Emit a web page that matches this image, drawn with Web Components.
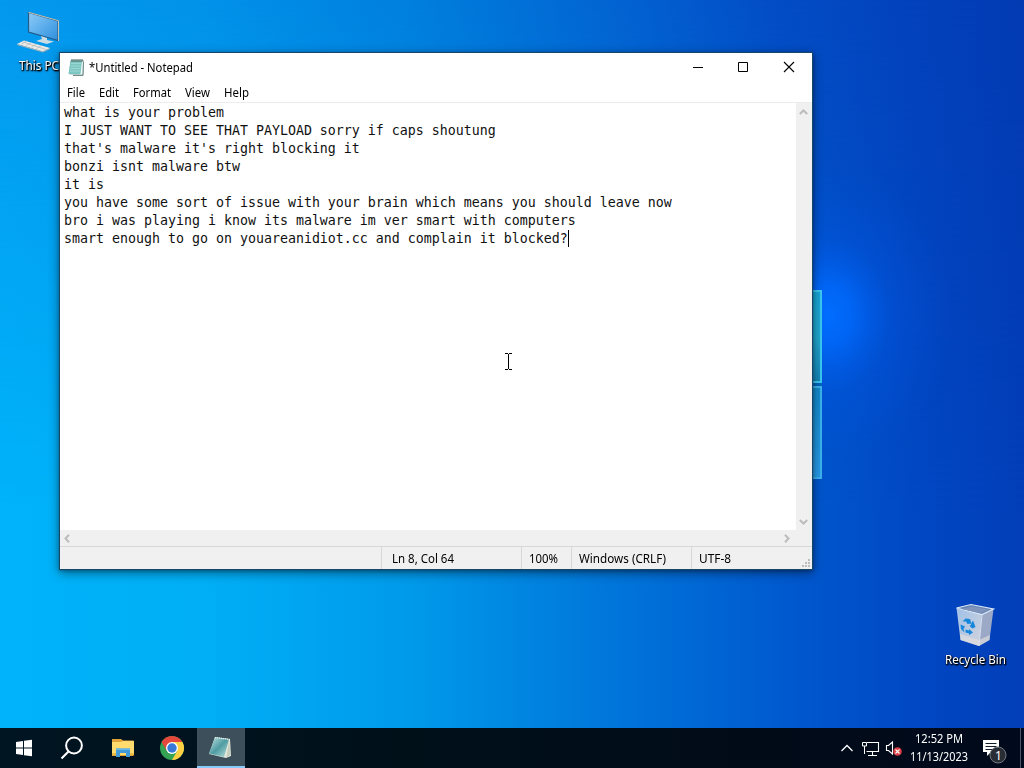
<!DOCTYPE html>
<html lang="en">
<head>
<meta charset="utf-8">
<title>Desktop</title>
<style>
html,body{margin:0;width:1024px;height:768px;overflow:hidden;font:12px/16px "Noto Sans","Open Sans",sans-serif;color:#000}
</style>
</head>
<body>
<win-desktop>
  <wall-paper slot="wall"></wall-paper>
  <desktop-icon slot="item" style="left:2px;top:8px" label="This PC" w="40">
    <svg width="48" height="48" viewBox="2 0 48 48">
      <defs><linearGradient id="scr" x1="0" y1="0" x2="1" y2="1"><stop offset="0" stop-color="#8fcaf5"/><stop offset=".5" stop-color="#5caeec"/><stop offset="1" stop-color="#308edb"/></linearGradient></defs>
      <path d="M15.500 4.500 45 13V32.500L15.500 24z" fill="url(#scr)" stroke="#235b89" stroke-width="1.200"/>
      <path d="M15.500 4.300 45.500 12.700V33" fill="none" stroke="#c9c3b0" stroke-width="1"/>
      <path d="M28 28 34 30v2l7 1.500-7 2.500-11-3 6-2z" fill="#cddbe2"/>
      <path d="M4 36 11 32.500 37 40 30 43.500z" fill="#ece8e2"/>
      <path d="M4 36 30 43.500 37 40v1l-7 3.500L4 37z" fill="#a7b2b8"/>
      <path d="M10 34 33 41.500M8.500 36l5-3m0 4.500 5-3m0 4.500 5-3m0 4.500 5-3" stroke="#a7b7c0" stroke-width=".7" fill="none"/>
    </svg>
  </desktop-icon>
  <desktop-icon slot="item" style="left:938px;top:602px" label="Recycle Bin" w="61">
    <svg width="48" height="48" viewBox="0 0 48 48">
      <defs><linearGradient id="bin" x1="0" y1="0" x2="1" y2="1"><stop offset="0" stop-color="#9fc1e8"/><stop offset="1" stop-color="#d2d3dc"/></linearGradient></defs>
      <path d="M5.500 6 31 12.500 28 44 9.500 38z" fill="url(#bin)"/>
      <path d="M31 12.500 42.500 7 38.500 38 28 44z" fill="#9ba9c7"/>
      <path d="M5.500 6 20 2.500 42.500 7 31 12.500z" fill="#6384b5" stroke="#dbe7f5" stroke-width="1.200"/>
      <path d="M10 7 21 4.500 38 7.500 30 11z" fill="#8094b9"/>
      <path d="M9 32 28 38v6L9.500 38zM28 38l11-5-.5 5L28 44z" fill="#e2dfdd" opacity=".65"/>
      <path d="M31 13 28 44" stroke="#d9e2ee" stroke-width="1"/>
      <path d="m11.500 19.500 3-3 4.500.5 1.500 4.500-4 .5-1.500-2.500zM22 18.500l2.500 6.500-3 1.500-3-2.500 1.200-1zM9.500 22.500l4.500 2-1.500 2.500 1 3.500-3.500-3.500zM14.500 27.500l3.500 1V27l4 3.500-4 2.500v-1.500l-3.500-1z" fill="#1787dc"/>
    </svg>
  </desktop-icon>
  <notepad-window slot="item">
    <menu-item slot="menu" label="File" w="18"></menu-item>
    <menu-item slot="menu" label="Edit" w="20"></menu-item>
    <menu-item slot="menu" label="Format" w="38"></menu-item>
    <menu-item slot="menu" label="View" w="25"></menu-item>
    <menu-item slot="menu" label="Help" w="25"></menu-item>
    <div>what is your problem</div>
    <div>I JUST WANT TO SEE THAT PAYLOAD sorry if caps shoutung</div>
    <div>that's malware it's right blocking it</div>
    <div>bonzi isnt malware btw</div>
    <div>it is</div>
    <div>you have some sort of issue with your brain which means you should leave now</div>
    <div>bro i was playing i know its malware im ver smart with computers</div>
    <div>smart enough to go on youareanidiot.cc and complain it blocked?<text-caret></text-caret></div>
  </notepad-window>
  <task-bar slot="bar"></task-bar>
</win-desktop>

<script>
const define = (name, html, init) => {
  const tpl = document.createElement('template');
  tpl.innerHTML = html;
  customElements.define(name, class extends HTMLElement {
    connectedCallback() {
      if (this.shadowRoot) return;
      this.attachShadow({mode: 'open'}).append(tpl.content.cloneNode(true));
      if (init) init(this, this.shadowRoot);
    }
  });
};

// A single line of interface text condensed to the width of its label box.
define('fit-text', `<style>
  :host{display:block;height:16px;flex:none;white-space:nowrap}
  span{display:inline-block;transform-origin:0 50%}
</style><span><slot></slot></span>`, (host, root) => {
  const w = +host.getAttribute('w'), span = root.querySelector('span');
  host.style.width = w + 'px';
  span.style.transform = 'scaleX(' + w / span.getBoundingClientRect().width + ')';
});

define('win-desktop', `<style>
  :host{display:grid;grid-template-rows:728px 40px;width:1024px;height:768px;position:relative;overflow:hidden}
  .area{position:relative;overflow:hidden}
</style><div class="area"><slot name="wall"></slot><slot name="item"></slot></div><slot name="bar"></slot>`);

define('wall-paper', `<style>
  :host{display:block;height:100%}
  svg{display:block}
</style>
<svg width="1024" height="728">
  <defs>
    <linearGradient id="top" x1="0" x2="1"><stop offset="0" stop-color="#0499ee"/><stop offset=".2" stop-color="#0292ea"/><stop offset=".4" stop-color="#007fde"/><stop offset=".6" stop-color="#0364d2"/><stop offset=".75" stop-color="#034ec6"/><stop offset=".9" stop-color="#0341bb"/><stop offset="1" stop-color="#033bb3"/></linearGradient>
    <linearGradient id="low" x1="0" x2="1"><stop offset="0" stop-color="#00b3fa"/><stop offset=".2" stop-color="#00aff6"/><stop offset=".4" stop-color="#009aea"/><stop offset=".6" stop-color="#0075da"/><stop offset=".75" stop-color="#005cd0"/><stop offset=".9" stop-color="#0147c3"/><stop offset="1" stop-color="#023eb8"/></linearGradient>
    <linearGradient id="fade" x2="0" y2="1"><stop offset="0" stop-color="#000"/><stop offset=".7" stop-color="#fff"/></linearGradient>
    <mask id="m"><rect width="1024" height="728" fill="url(#fade)"/></mask>
    <radialGradient id="glow"><stop offset="0" stop-color="#006dff"/><stop offset=".2" stop-color="#0068fb" stop-opacity=".85"/><stop offset=".5" stop-color="#0058e4" stop-opacity=".4"/><stop offset="1" stop-color="#0050d8" stop-opacity="0"/></radialGradient>
    <linearGradient id="p1" x2="0" y2="1"><stop offset="0" stop-color="#16a6d8"/><stop offset=".5" stop-color="#21a7cf"/><stop offset="1" stop-color="#1584b7"/></linearGradient>
    <linearGradient id="p2" x2="0" y2="1"><stop offset="0" stop-color="#1489ca"/><stop offset="1" stop-color="#299be8"/></linearGradient>
  </defs>
  <rect width="1024" height="728" fill="url(#top)"/>
  <rect width="1024" height="728" fill="url(#low)" mask="url(#m)"/>
  <ellipse cx="828" cy="315" rx="125" ry="155" fill="url(#glow)"/>
  <rect x="800" y="291" width="21" height="91" fill="url(#p1)" stroke="#38c9f3" stroke-width="2"/>
  <rect x="800" y="387" width="21" height="91" fill="url(#p2)" stroke="#39b4ef" stroke-width="2"/>
  <rect x="800" y="383" width="22" height="3" fill="#0065bc"/>
</svg>`);

define('desktop-icon', `<style>
  :host{position:absolute;display:flex;flex-direction:column;align-items:center;gap:2px;width:74px;color:#fff;text-shadow:1px 1px 1px #000,0 1px 2px #000,1px 1px 2px #000}
</style><slot></slot><fit-text></fit-text>`, (host, root) => {
  const t = root.querySelector('fit-text'), n = document.createElement('fit-text');
  n.setAttribute('w', host.getAttribute('w'));
  n.textContent = host.getAttribute('label');
  t.replaceWith(n);
});

define('menu-item', `<style>:host{display:block}</style>`, (host, root) => {
  const n = document.createElement('fit-text');
  n.setAttribute('w', host.getAttribute('w'));
  n.textContent = host.getAttribute('label');
  root.append(n);
});

define('text-caret', `<style>:host{display:inline-block;width:1px;height:17px;background:#000;vertical-align:top}</style>`);

define('text-cursor', `<style>:host{position:absolute;left:444px;top:300px;width:9px;height:17px}svg{display:block}</style>
<svg width="9" height="17"><path d="M1 .5h3m1 0h3M4.500 1v15M1 16.500h3m1 0h3" stroke="#000" fill="none"/></svg>`);

define('scroll-arrow', `<style>:host{display:grid;place-items:center;width:15px;height:16px}svg{display:block}</style>
<svg width="9" height="9" viewBox="0 0 9 9"><path d="M.8 6 4.500 2.500 8.200 6" fill="none" stroke="#bcbcbc" stroke-width="2"/></svg>`, (host, root) => {
  root.querySelector('svg').style.transform = 'rotate(' + (host.getAttribute('turn') || 0) + 'deg)';
});

define('notepad-window', `<style>
  :host{position:absolute;left:59px;top:52px;width:752px;height:516px;border:1px solid #164669;background:#fff;display:flex;flex-direction:column;box-shadow:0 3px 10px rgba(0,0,0,.45),0 1px 3px rgba(0,0,0,.25)}
  header{height:29px;display:flex;align-items:center;flex:none}
  header>svg{flex:none}
  .ico{margin:0 5px 0 8px}
  .btns{margin-left:auto;display:flex}
  .btns svg{display:block}
  nav{height:20px;display:flex;gap:14px;padding:1px 0 0 7px;box-sizing:border-box;flex:none;align-items:center}
  .body{display:grid;grid-template-columns:736px 16px;grid-template-rows:427px;height:428px;box-sizing:border-box;border-top:1px solid #ececec;flex:none}
  .text{font:13.290px/18px "DejaVu Sans Mono","Liberation Mono",monospace;padding:1px 0 0 4px;color:#111;white-space:nowrap}
  .vs{background:#f0f0f0;display:flex;flex-direction:column;justify-content:space-between;padding:1px 0}
  .hs{background:#f0f0f0;height:17px;display:flex;justify-content:space-between;align-items:flex-start;padding-right:18px;border-bottom:1px solid #d7d7d7;box-sizing:border-box;flex:none}
  footer{flex:1;background:#f0f0f0;display:grid;grid-template-columns:321px 140px 50px 120px 1fr;position:relative}
  footer>div{border-left:1px solid #d7d7d7;display:flex;align-items:center;padding:2px 0 0 7px}
  footer>div:first-child{border:0}
  .grip{position:absolute;right:1px;bottom:1px}
  text-cursor{z-index:1}
</style>
<header>
  <svg class="ico" width="16" height="18" viewBox="0 1 16 18"><path d="M3 2.500h12.500L15 17 1.500 16z" fill="#eefafa" stroke="#8da7a4" stroke-width=".7"/><path d="M2.500 2.500H14L12.500 16H.5z" fill="#7cc6c2"/><path d="M3 5.500h10M2.700 8h10M2.300 10.500h10M2 13h10" stroke="#a6dcd9" stroke-width=".8"/><path d="M15.500 4 15 17.500H5" fill="none" stroke="#6f8b87"/><path d="M4 1v3m2-3v3m2-3v3m2-3v3m2-3v3m2-3v3" stroke="#49625f"/></svg>
  <fit-text w="104">*Untitled - Notepad</fit-text>
  <div class="btns">
    <svg width="46" height="29"><path d="M19 14.500h10" stroke="#000"/></svg>
    <svg width="46" height="29"><path d="M18.500 9.500h9v9h-9z" fill="none" stroke="#000"/></svg>
    <svg width="46" height="29"><path d="m18 9 10 10M28 9 18 19" stroke="#000" stroke-width="1.100"/></svg>
  </div>
</header>
<nav><slot name="menu"></slot></nav>
<div class="body">
  <div class="text"><slot></slot></div>
  <div class="vs"><scroll-arrow></scroll-arrow><scroll-arrow turn="180"></scroll-arrow></div>
</div>
<div class="hs"><scroll-arrow turn="-90"></scroll-arrow><scroll-arrow turn="90"></scroll-arrow></div>
<footer>
  <div></div><div style="padding-left:10px"><fit-text w="62">Ln 8, Col 64</fit-text></div><div><fit-text w="29">100%</fit-text></div><div><fit-text w="87">Windows (CRLF)</fit-text></div><div><fit-text w="32">UTF-8</fit-text></div>
  <svg class="grip" width="9" height="9"><path d="M6 0h2v2H6zM3 3h2v2H3zM6 3h2v2H6zM0 6h2v2H0zM3 6h2v2H3zM6 6h2v2H6z" fill="#bdbdbd"/></svg>
</footer>
<text-cursor></text-cursor>`);

define('task-bar', `<style>
  :host{display:flex;justify-content:space-between;height:40px;background:linear-gradient(90deg,#001522,#001019 40%,#010b18 75%,#010a1c);color:#fff}
  .left,.tray{display:flex;align-items:center}
  svg{display:block;flex:none}
  .active{background:#3c4f5b;border-bottom:2px solid #87c9f8;height:38px}
  .clock{width:58px;display:flex;flex-direction:column;align-items:center;gap:2px;margin:0 14px 0 7px;padding-bottom:1px}
  .edge{height:40px;width:4px;box-sizing:border-box;border-left:1px solid #4d5665}
</style>
<div class="left">
  <svg width="48" height="40"><path d="M16 14l7-1v6.500h-7zM24 12.800l8-1v7.700h-8zM16 20.500h7V27l-7-1zM24 20.500h8v7.800l-8-1.100z" fill="#fff"/></svg>
  <svg width="49" height="40"><circle cx="26" cy="17.500" r="7.900" fill="none" stroke="#fff" stroke-width="2"/><path d="M20.500 23.500 13.500 30.500" stroke="#fff" stroke-width="2.200"/></svg>
  <svg width="51" height="40" viewBox="0 0 51 40"><path d="M15 11h9l2 1.500h10.500V28H15z" fill="#e3a33b"/><path d="M15 14h9l2-1h11v14H15z" fill="#ffdc6d"/><path d="M19 20.500h14V29h-4v-4h-6v4h-4z" fill="#409bd8"/><path d="M19 20.500h14V22H19z" fill="#65b8e7"/><path d="M15 25h4v2h-4zm18 0h4v2h-4z" fill="#eebd45"/></svg>
  <svg width="49" height="40" viewBox="0 0 49 40"><circle cx="24" cy="20" r="12" fill="#34a353"/><path d="M34.400 14A12 12 0 0 1 24 32L29.200 23 24 14z" fill="#ffd044"/><path d="M13.600 14A12 12 0 0 1 34.400 14H24L18.800 23z" fill="#e4473b"/><circle cx="24" cy="20" r="6" fill="#fff"/><circle cx="24" cy="20" r="4.700" fill="#3879d8"/></svg>
  <div class="active"><svg width="48" height="38" viewBox="0 0 48 38"><defs><linearGradient id="np" x1="0" y1="0" x2="1" y2="1"><stop offset="0" stop-color="#c5e5e4"/><stop offset=".5" stop-color="#4e9ca2"/><stop offset="1" stop-color="#bddfdb"/></linearGradient></defs><path d="M18 9 33 11 34 28 29 30 12 26z" fill="#e3e7db"/><path d="M18 9.500 32 11.500 27 29 12 25.500z" fill="url(#np)"/><path d="m32 12 1.500 15-4 2.500z" fill="#c6cfbe"/><path d="M18 9.500 33 11.500" stroke="#e8f7f7" stroke-width="1.200" stroke-dasharray="1 1"/></svg></div>
</div>
<div class="tray">
  <svg width="23" height="40"><path d="m4.500 23 5.500-5.500 5.500 5.500" fill="none" stroke="#fff" stroke-width="1.300"/></svg>
  <svg width="24" height="40"><path d="M7 14.500h11.500v9H6.500M12.500 24v3M8 27.500h9" fill="none" stroke="#fff" stroke-width="1.100"/><path d="M2.500 14.500h4v3.500h-4zM4.500 18v8" fill="#061320" stroke="#fff"/></svg>
  <svg width="19" height="40"><path d="M2.500 17.500h2l4-3.500v12l-4-3.500h-2z" fill="none" stroke="#fff" stroke-width="1.100"/><circle cx="13.500" cy="23.500" r="4.300" fill="#db3e41"/><path d="m11.500 21.500 4 4m0-4-4 4" stroke="#fff" stroke-width="1.100"/></svg>
  <div class="clock"><fit-text w="48">12:52 PM</fit-text><fit-text w="58">11/13/2023</fit-text></div>
  <svg width="38" height="40"><path d="M1 12h16v12H9l-4 4v-4H1z" fill="#fff"/><path d="M3.500 15.500h11M3.500 18.500h11M3.500 21.500h8" stroke="#111c29"/><circle cx="16" cy="27" r="8" fill="#292e34" stroke="#727980"/><text x="13" y="31.500" font-family="Noto Sans" font-size="12" fill="#fff">1</text></svg>
  <div class="edge"></div>
</div>`);
</script>
</body>
</html>
